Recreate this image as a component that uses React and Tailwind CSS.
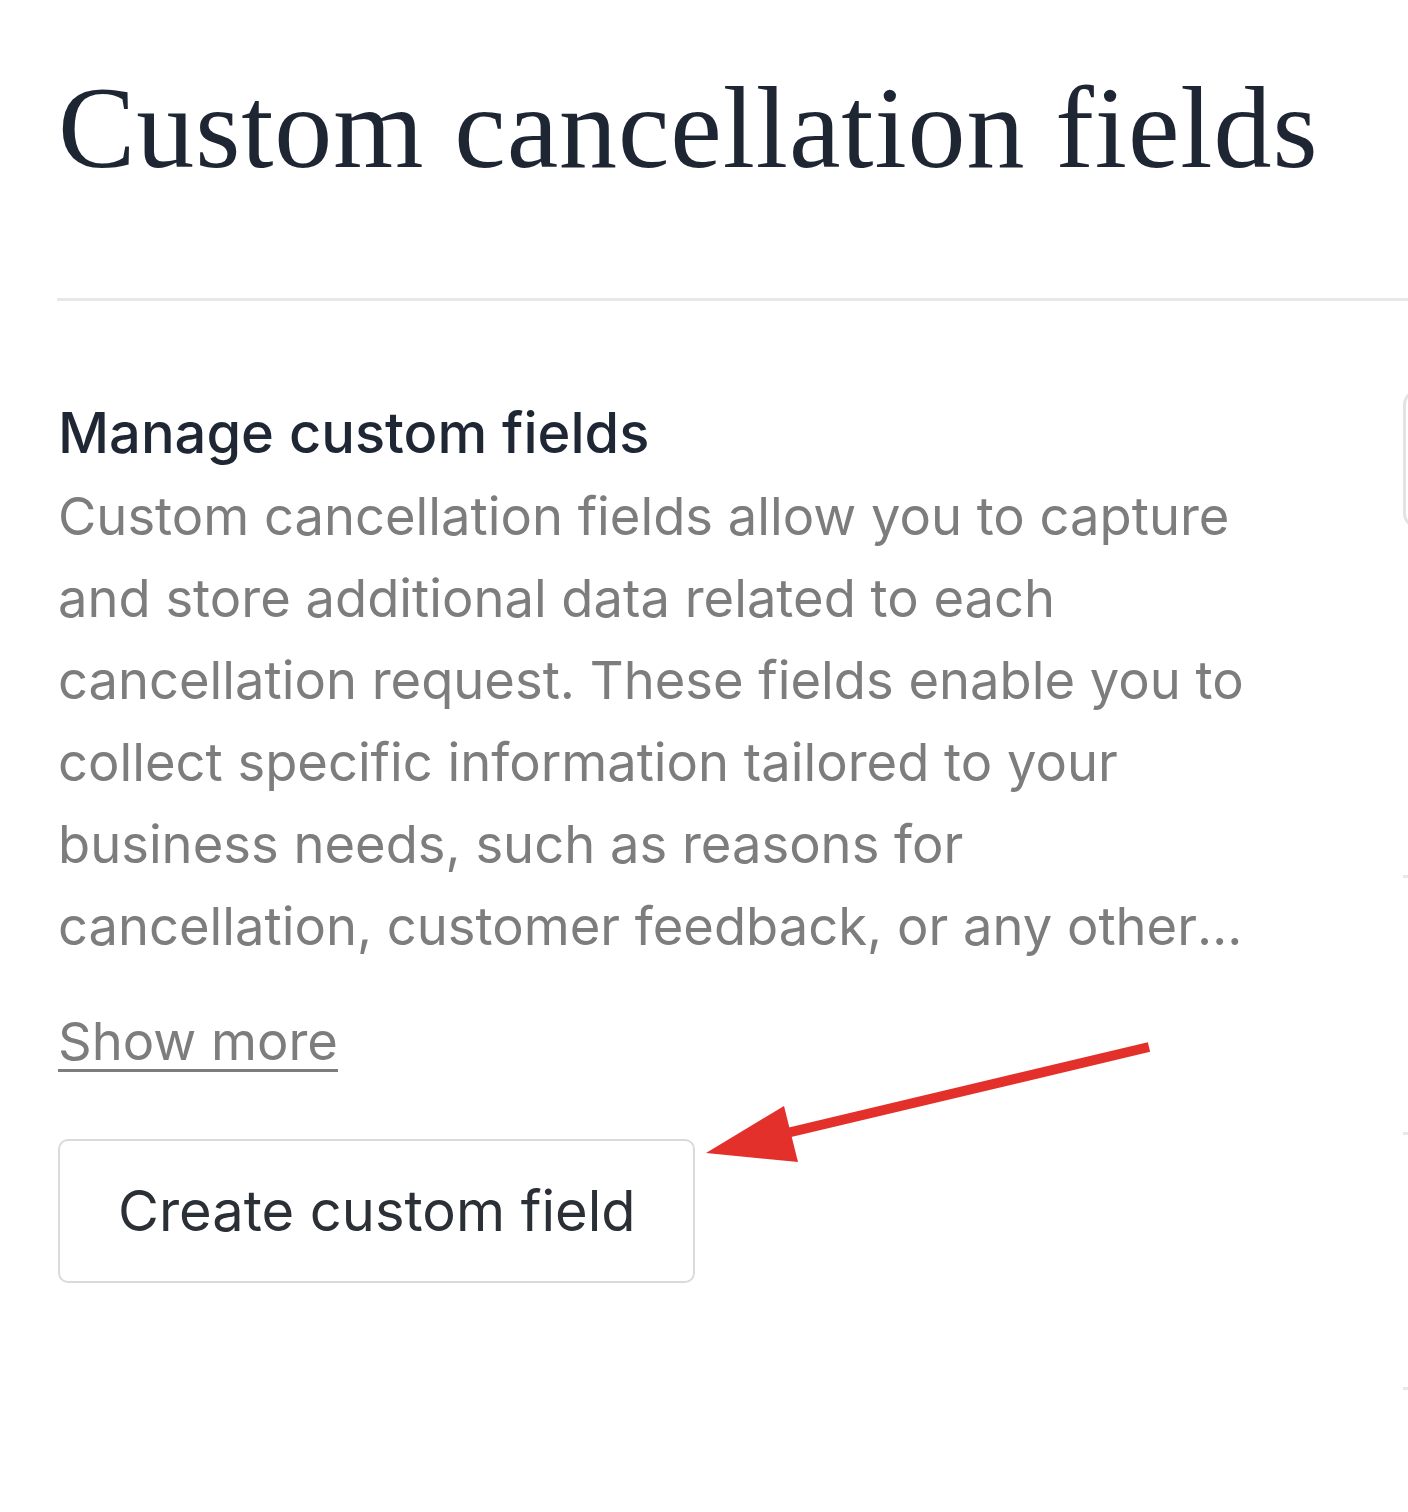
import React from "react";

const sans = { fontFamily: "Inter, 'Liberation Sans', sans-serif" };

function Arrow() {
  // red annotation arrow pointing at the button
  return (
    <svg
      className="absolute left-0 top-0 pointer-events-none"
      width="1408"
      height="1512"
      viewBox="0 0 1408 1512"
    >
      <line x1="1149" y1="1047" x2="770" y2="1137" stroke="#e3302a" strokeWidth="10" strokeLinecap="butt" />
      <polygon points="706,1153 784,1106 798,1162" fill="#e3302a" />
    </svg>
  );
}

export default function App() {
  return (
    <div className="relative min-h-screen bg-white overflow-hidden">
      <div className="pl-[58px] pt-[70px]">
        <h1 className="text-[116px] leading-none text-[#1f2633] font-['Liberation_Serif',serif] tracking-[0.9px] whitespace-nowrap">
          Custom cancellation fields
        </h1>
      </div>

      <div className="ml-[57px] mt-[112px] h-[3px] bg-[#e8e8e8]" />

      <div className="flex pl-[58px] pt-[100px]" style={sans}>
        {/* Left column */}
        <div className="w-[1215px] shrink-0">
          <h2 className="text-[56px] leading-[64px] font-medium text-[#1e2733]">Manage custom fields</h2>
          <p className="mt-[10px] text-[52.5px] leading-[82px] text-[#7d7d7d] line-clamp-6">
            Custom cancellation fields allow you to capture and store additional data related to each
            cancellation request. These fields enable you to collect specific information tailored to
            your business needs, such as reasons for cancellation, customer feedback, or any other
            relevant details that help you understand why customers cancel.
          </p>
          <div className="mt-[42px]">
            <a className="text-[52.5px] leading-[64px] text-[#7d7d7d] underline decoration-[3px] underline-offset-[9px]">
              Show more
            </a>
          </div>
          <div className="mt-[66px]">
            <button className="h-[144px] px-[58px] border-2 border-[#dadada] rounded-[10px] bg-white text-[56px] text-[#2b2f36]">
              Create custom field
            </button>
          </div>
        </div>

        {/* Right column, cut off by the viewport */}
        <div className="ml-[130px] -mt-[12px] w-[400px] shrink-0">
          <div className="h-[140px] border-[3px] border-[#e3e3e3] rounded-2xl" />
          <div className="mt-[346px] h-[3px] bg-[#e8e8e8]" />
          <div className="mt-[254px] h-[3px] bg-[#e8e8e8]" />
          <div className="mt-[252px] h-[3px] bg-[#e8e8e8]" />
        </div>
      </div>

      <Arrow />
    </div>
  );
}
